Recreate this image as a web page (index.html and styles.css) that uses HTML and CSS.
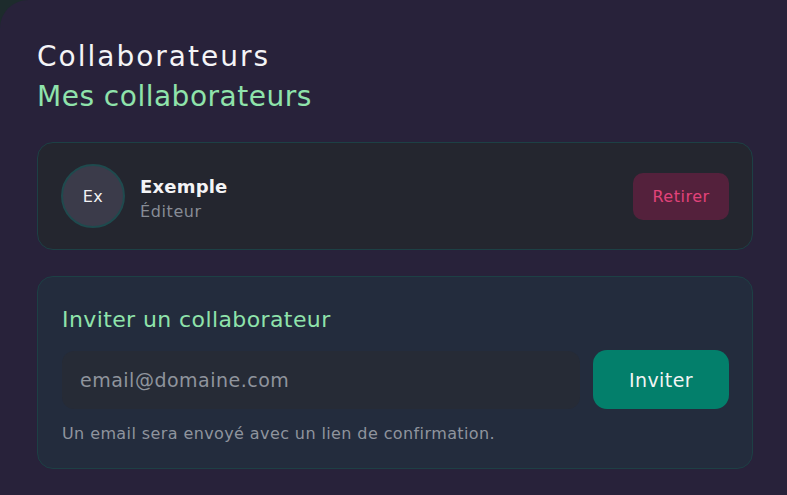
FILE: index.html
```html
<!DOCTYPE html>
<html lang="fr">
<head>
<meta charset="utf-8">
<link rel="stylesheet" href="styles.css">
</head>
<body>
<main class="panel">
  <h1 class="title">Collaborateurs</h1>
  <h2 class="subtitle">Mes collaborateurs</h2>
  <section class="card member">
    <div class="avatar">Ex</div>
    <div class="info">
      <div class="name">Exemple</div>
      <div class="role">Éditeur</div>
    </div>
    <button class="btn-remove">Retirer</button>
  </section>
  <section class="card invite">
    <h3 class="invite-title">Inviter un collaborateur</h3>
    <div class="invite-row">
      <input class="email" type="text" placeholder="email@domaine.com">
      <button class="btn-invite">Inviter</button>
    </div>
    <p class="hint">Un email sera envoyé avec un lien de confirmation.</p>
  </section>
</main>
</body>
</html>
```
FILE: styles.css
```css
* { box-sizing: border-box; }
html, body { margin: 0; height: 100%; }
body {
  background: #1d2b2c;
  font-family: "DejaVu Sans", "Noto Sans", sans-serif;
}
.panel {
  width: 787px;
  height: 495px;
  background: #28223a;
  border-top-left-radius: 28px;
  padding: 39px 34px 0 37px;
}
.title {
  margin: 0;
  font-size: 28px;
  font-weight: 400;
  color: #f4f4f6;
  line-height: 36px;
  letter-spacing: 2px;
}
.subtitle {
  margin: 4px 0 0;
  font-size: 28px;
  font-weight: 400;
  color: #8fe3ab;
  line-height: 36px;
  letter-spacing: 0.5px;
}
.card {
  border: 1px solid #1d4045;
  border-radius: 16px;
}
.member {
  margin-top: 27px;
  height: 108px;
  background: #24262f;
  display: flex;
  align-items: center;
  padding: 0 23px;
}
.avatar {
  width: 64px;
  height: 64px;
  border-radius: 50%;
  background: #3b3b4a;
  border: 2px solid #1f4a4e;
  color: #f2f2f4;
  font-size: 16px;
  letter-spacing: 0.5px;
  display: flex;
  align-items: center;
  justify-content: center;
}
.info {
  margin-left: 15px;
  padding-top: 6px;
  flex: 1;
}
.name {
  font-size: 18px;
  font-weight: 700;
  color: #f4f4f6;
  line-height: 24px;
  letter-spacing: 0.2px;
}
.role {
  font-size: 16px;
  color: #878c96;
  line-height: 22px;
  margin-top: 2px;
  letter-spacing: 0.6px;
}
.btn-remove {
  width: 96px;
  height: 47px;
  border: none;
  border-radius: 10px;
  background: #54213c;
  color: #e2437a;
  font-family: inherit;
  font-size: 16px;
  letter-spacing: 0.5px;
}
.invite {
  margin-top: 26px;
  height: 193px;
  background: #232c3d;
  padding: 28px 23px 0 24px;
}
.invite-title {
  margin: 0;
  font-size: 22px;
  font-weight: 400;
  color: #8fe3ab;
  line-height: 30px;
  letter-spacing: 0.4px;
}
.invite-row {
  margin-top: 15px;
  display: flex;
  gap: 13px;
  align-items: center;
}
.email {
  flex: 1;
  height: 58px;
  border: none;
  border-radius: 12px;
  background: #262b36;
  padding: 0 18px;
  font-family: inherit;
  font-size: 19px;
  letter-spacing: 0.5px;
  color: #e0e0e6;
  outline: none;
}
.email::placeholder { color: #8f949d; }
.btn-invite {
  width: 136px;
  height: 59px;
  border: none;
  border-radius: 14px;
  background: #037f6b;
  color: #f2f4f4;
  font-family: inherit;
  font-size: 19px;
  letter-spacing: 0.4px;
}
.hint {
  margin: 14px 0 0;
  font-size: 16px;
  color: #8f949d;
  line-height: 22px;
  letter-spacing: 0.4px;
}
```
